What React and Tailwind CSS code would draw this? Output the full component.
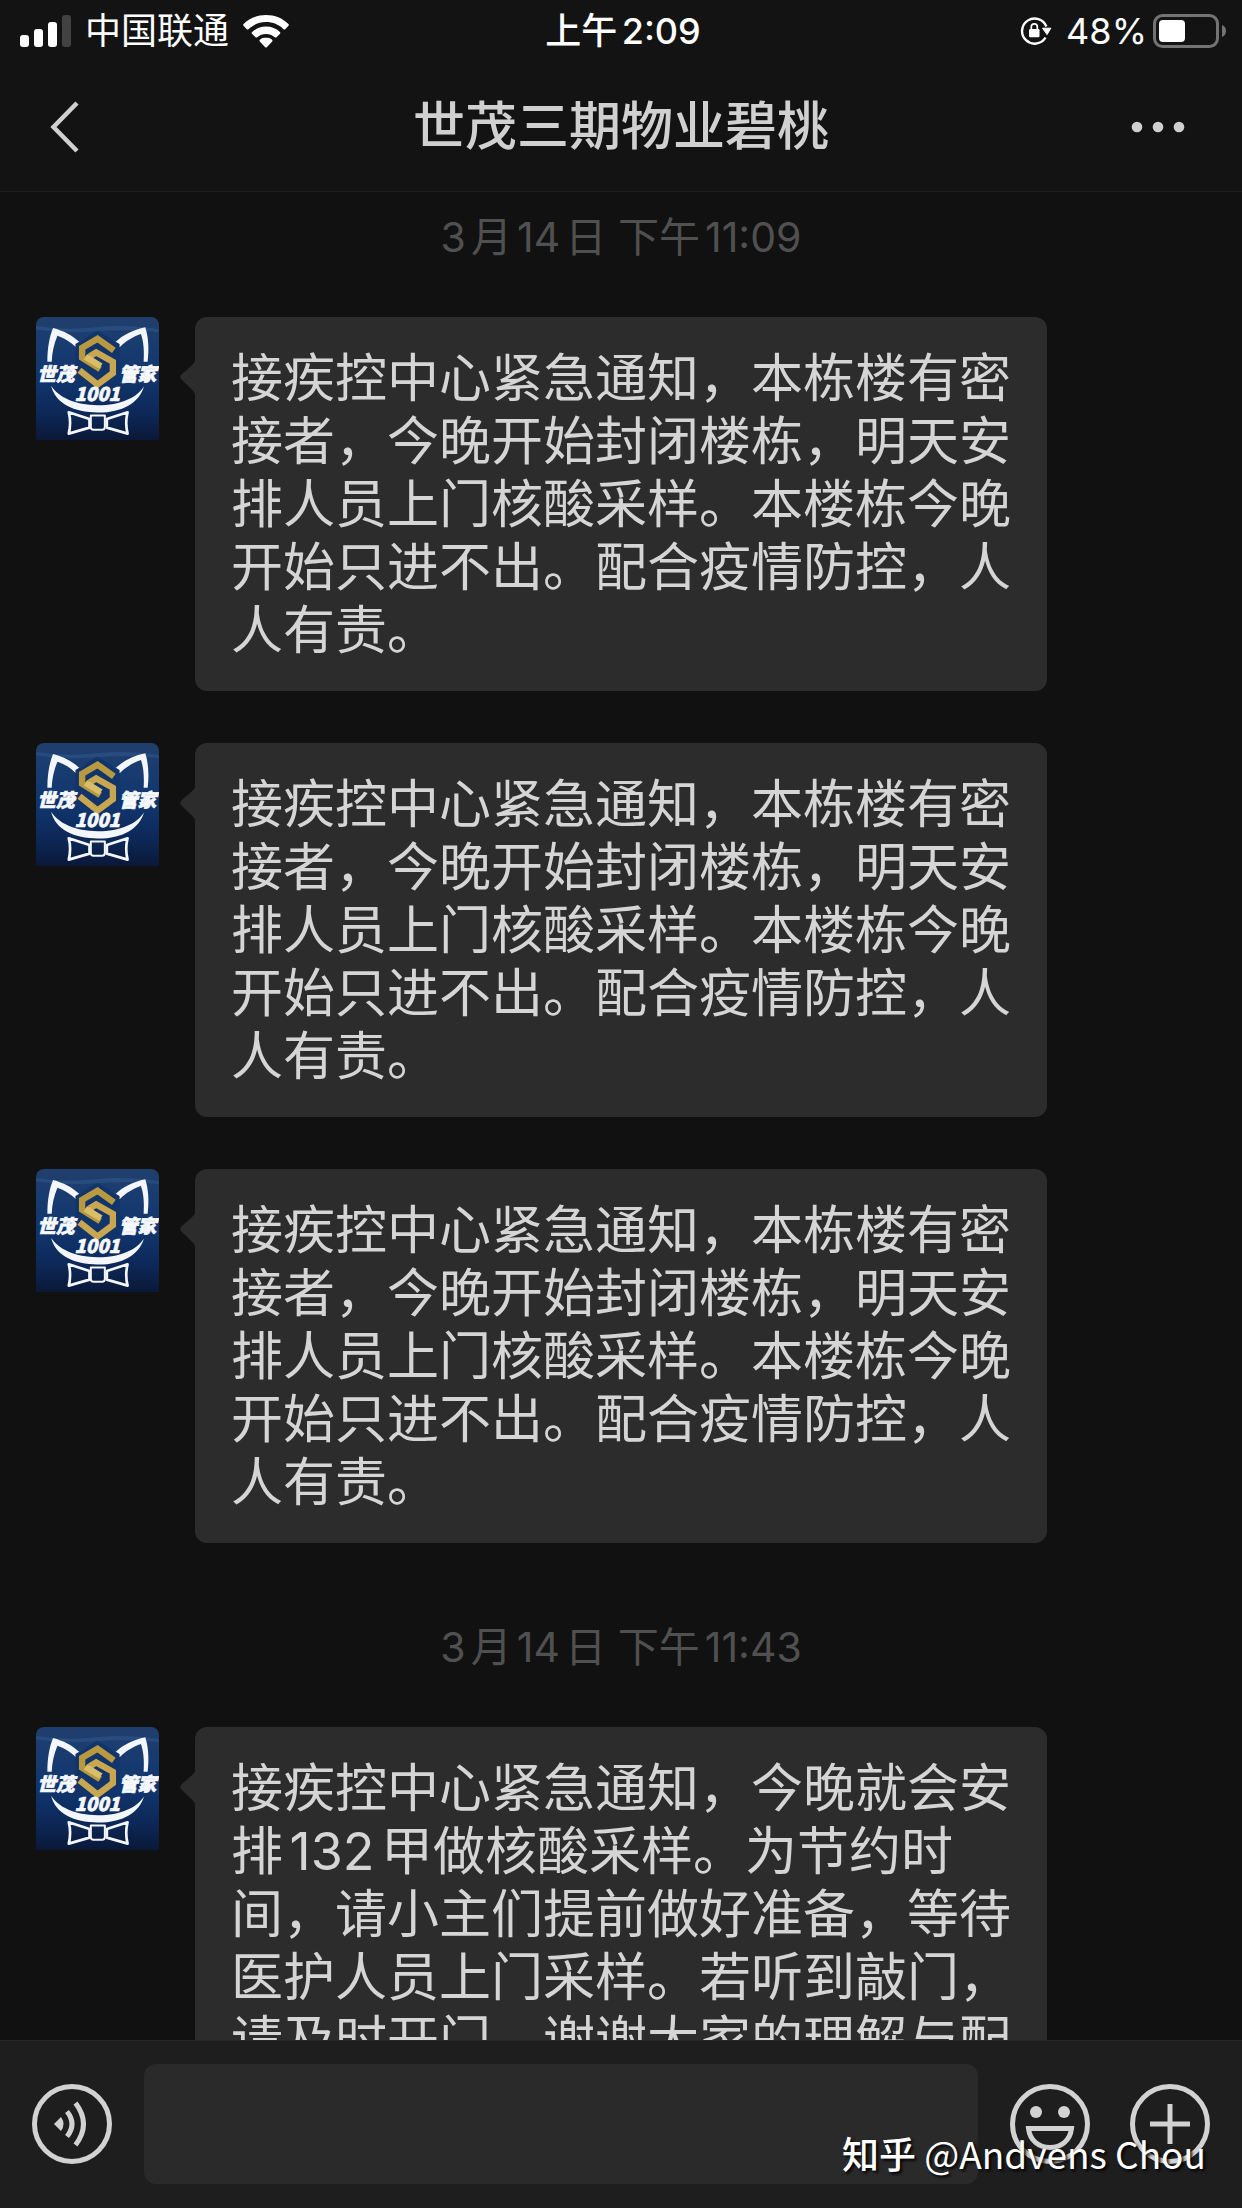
const notice =
  "接疾控中心紧急通知，本栋楼有密接者，今晚开始封闭楼栋，明天安排人员上门核酸采样。本楼栋今晚开始只进不出。配合疫情防控，人人有责。";

const groups = [
  { time: "3月14日 下午11:09", messages: [notice, notice, notice] },
  {
    time: "3月14日 下午11:43",
    messages: [
      "接疾控中心紧急通知，今晚就会安排132甲做核酸采样。为节约时间，请小主们提前做好准备，等待医护人员上门采样。若听到敲门，请及时开门，谢谢大家的理解与配合。",
    ],
  },
];

function SignalIcon() {
  return (
    <svg className="h-8 w-[51px]" viewBox="0 0 51 32" fill="#fff" aria-hidden="true">
      <rect x="0" y="20" width="9" height="12" rx="3" />
      <rect x="14" y="14" width="9" height="18" rx="3" />
      <rect x="28" y="7" width="9" height="25" rx="3" />
      <rect x="42" y="0" width="9" height="32" rx="3" fill="#424242" />
    </svg>
  );
}

function WifiIcon() {
  return (
    <svg className="h-[33px] w-[46px]" viewBox="0 0 46 33" fill="#fff" aria-hidden="true">
      <path d="M23 0C14.200 0 6.300 3.300.6 8.900c-.6.600-.6 1.200-.1 1.800l3.300 3.500c.5.500 1.200.5 1.700 0C10.100 9.700 16.200 7.100 23 7.100s12.900 2.600 17.500 7.100c.5.5 1.200.5 1.700 0l3.300-3.500c.5-.6.500-1.200-.1-1.800C39.700 3.300 31.800 0 23 0z" />
      <path d="M23 11.600c-5.400 0-10.200 2-13.900 5.400-.6.500-.6 1.200-.1 1.700l3.500 3.500c.5.500 1.100.5 1.700.1 2.400-2.200 5.400-3.400 8.800-3.400s6.400 1.200 8.800 3.400c.6.400 1.200.4 1.700-.1l3.500-3.500c.5-.5.500-1.200-.1-1.700-3.700-3.400-8.500-5.400-13.900-5.400z" />
      <path d="M23 22.600c-2.400 0-4.500.8-6.100 2.200-.6.500-.6 1.100-.1 1.600l5.400 5.800c.5.500 1.100.5 1.600 0l5.400-5.800c.5-.5.500-1.100-.1-1.600-1.600-1.400-3.700-2.200-6.100-2.200z" />
    </svg>
  );
}

function RotationLockIcon() {
  return (
    <svg className="h-[30px] w-[32px]" viewBox="0 0 32 30" fill="none" aria-hidden="true">
      <path d="M25.500 21.500A12.600 12.600 0 1 1 26.400 10.500" stroke="#fff" strokeWidth="2.400" />
      <path d="M22.500 12.200h8.400L27 18.600z" fill="#fff" stroke="#fff" strokeLinejoin="round" />
      <rect x="9" y="13" width="10.500" height="8.200" rx="1.200" fill="#fff" />
      <path d="M11.300 13.500v-2.700a3 3 0 0 1 6 0v2.700" stroke="#fff" strokeWidth="1.700" />
    </svg>
  );
}

function BatteryIcon() {
  return (
    <svg className="h-[34px] w-[73px]" viewBox="0 0 73 34" fill="none" aria-hidden="true">
      <rect x="1.500" y="1.500" width="63" height="31" rx="8" stroke="#737373" strokeWidth="3" />
      <rect x="6" y="6" width="26" height="22" rx="4" fill="#fff" />
      <path d="M69 11c2.600 1 4 3.300 4 6s-1.400 5-4 6z" fill="#737373" />
    </svg>
  );
}

function StatusBar() {
  return (
    <div className="grid grid-cols-[1fr_auto_1fr] items-center pt-2 pl-5 pr-4 text-4xl leading-[46px] text-white">
      <div className="flex items-center gap-[14px]">
        <SignalIcon />
        <span>中国联通</span>
        <WifiIcon />
      </div>
      <span className="font-medium [text-autospace:normal]">上午2:09</span>
      <div className="flex items-center justify-end">
        <RotationLockIcon />
        <span className="ml-[14px] mr-[6px]">48%</span>
        <BatteryIcon />
      </div>
    </div>
  );
}

function Header() {
  return (
    <header className="shrink-0 border-b border-[#1e1e1e] bg-[#131313] pb-6">
      <StatusBar />
      <div className="flex items-center justify-between pt-[33px] pl-[48px] pr-[56px] text-[#d0d0d0]">
        <button type="button" aria-label="返回" className="w-[64px]">
          <svg className="h-[52px] w-8" viewBox="0 0 32 52" fill="none" aria-hidden="true">
            <path d="M29 2L5.500 26 29 50" stroke="currentColor" strokeWidth="4.500" />
          </svg>
        </button>
        <h1 className="text-[52px] leading-[80px] font-medium">世茂三期物业碧桃</h1>
        <button type="button" aria-label="更多" className="w-[56px]">
          <svg className="h-3 w-14" viewBox="0 0 56 12" fill="currentColor" aria-hidden="true">
            <circle cx="7" cy="6" r="5.300" />
            <circle cx="28" cy="6" r="5.300" />
            <circle cx="49" cy="6" r="5.300" />
          </svg>
        </button>
      </div>
    </header>
  );
}

function Avatar() {
  return (
    <svg
      className="size-[123px] shrink-0 rounded-t-lg"
      viewBox="48 51 368 368"
      role="img"
      aria-label="世茂管家"
    >
      <defs>
        <linearGradient id="sky" x1="0" y1="0" x2="0" y2="1">
          <stop offset="0" stopColor="#213f6c" />
          <stop offset="0.200" stopColor="#193c70" />
          <stop offset="0.500" stopColor="#10366e" />
          <stop offset="0.780" stopColor="#0d2857" />
          <stop offset="1" stopColor="#0a1838" />
        </linearGradient>
      </defs>
      <rect x="48" y="51" width="368" height="368" fill="url(#sky)" />
      <path d="M48 78q90 14 180 4t188 6v8q-90-10-188-2t-180-6z" fill="#34598f" opacity="0.500" />
      <g fill="#f3f6fb">
        <path d="M82 185C82 145 88 110 99 84c30 8 58 22 79 42 34-23 72-24 108 0 22-21 52-36 89-44 9 28 12 64 7 103h-12c2-34 0-60-8-83-24 8-44 20-63 39l-14 2c-34-24-70-24-104 0l-14-2c-18-17-34-27-55-34-10 24-16 50-17 78z" />
        <path d="M93 257c22 34 72 58 140 58s116-22 138-56c-14 50-68 79-138 78-72-1-126-26-140-80z" />
      </g>
      <g fill="none" stroke="#f3f6fb" strokeLinejoin="round">
        <path d="M146 336l62 20v26l-62 18q8-32 0-64zM322 336l-62 20v26l62 18q-8-32 0-64z" strokeWidth="8" />
        <path d="M212 346h42v34q0 8-8 8h-26q-8 0-8-8z" strokeWidth="6" />
      </g>
      <path d="M232 92l66 40v104l-66 40-66-40V132z" fill="#11356b" />
      <g fill="none" strokeWidth="19">
        <path d="M281 151l-49-35-46 27v30l54 34" stroke="#b8993f" />
        <path d="M178 210l54 43 46-34v-34l-50-28-20 12" stroke="#c9a750" />
        <path d="M196 170l46 28" stroke="#d9bd68" />
      </g>
      <g
        fill="#f6f8fc"
        stroke="#f6f8fc"
        strokeWidth="2"
        className="font-['Noto_Sans_CJK_SC',sans-serif] font-black italic"
      >
        <text x="52" y="241" fontSize="56">世茂</text>
        <text x="296" y="241" fontSize="56">管家</text>
        <text x="163" y="303" fontSize="56">1001</text>
      </g>
    </svg>
  );
}

function Message({ text }) {
  return (
    <li className="flex items-start gap-9">
      <Avatar />
      <div className="relative max-w-[852px] flex-1 rounded-xl bg-[#2c2c2c] px-9 pt-[30px] pb-[29px]">
        <svg
          className="absolute top-11 right-full h-[33px] w-[15px]"
          viewBox="0 0 15 33"
          fill="#2c2c2c"
          aria-hidden="true"
        >
          <path d="M15 0C14 3 11 5 1.500 13.500q-2.500 2.500 0 5C11 28 14 30 15 33z" />
        </svg>
        <p className="text-[52px] leading-[63px] text-[#d5d5d5] [text-autospace:normal]">{text}</p>
      </div>
    </li>
  );
}

function InputBar() {
  return (
    <footer className="flex shrink-0 items-center border-t border-[#262626] bg-[#1e1e1e] px-8 pt-[23px] pb-6 text-[#d2d2d2]">
      <button type="button" aria-label="语音" className="size-20 shrink-0">
        <svg className="size-20" viewBox="0 0 80 80" fill="none" stroke="currentColor" strokeWidth="5" aria-hidden="true">
          <circle cx="40" cy="40" r="37.500" />
          <path d="M22 40l7-7q5 7 0 14z" fill="currentColor" stroke="none" />
          <path d="M35 27.500q10 12.500 0 25M43.500 19q16 21 0 42" />
        </svg>
      </button>
      <input
        type="text"
        aria-label="输入消息"
        className="mx-8 h-[120px] min-w-0 flex-1 rounded-xl bg-[#2a2a2a] px-6 text-[52px] outline-none"
      />
      <button type="button" aria-label="表情" className="mr-10 size-20 shrink-0">
        <svg className="size-20" viewBox="0 0 80 80" fill="none" stroke="currentColor" strokeWidth="5" aria-hidden="true">
          <circle cx="40" cy="40" r="37.500" />
          <circle cx="26" cy="28" r="6" fill="currentColor" stroke="none" />
          <circle cx="54" cy="28" r="6" fill="currentColor" stroke="none" />
          <path d="M18.500 44.500h43C60 57 51 63.500 40 63.500S20 57 18.500 44.500z" />
        </svg>
      </button>
      <button type="button" aria-label="更多功能" className="size-20 shrink-0">
        <svg className="size-20" viewBox="0 0 80 80" fill="none" stroke="currentColor" strokeWidth="5" aria-hidden="true">
          <circle cx="40" cy="40" r="37.500" />
          <path d="M40 20v40M20 40h40" />
        </svg>
      </button>
    </footer>
  );
}

export default function App() {
  return (
    <div
      lang="zh-CN"
      className="relative flex h-screen flex-col overflow-hidden bg-[#111111] font-['Inter','Noto_Sans_CJK_SC',sans-serif]"
    >
      <Header />
      <main className="flex min-h-0 flex-1 flex-col gap-[76px] overflow-y-auto px-9 pt-[17px] [scrollbar-width:none]">
        {groups.map((group) => (
          <section key={group.time} className="flex flex-col gap-[52px]">
            <time className="text-center text-[41px] leading-[56px] text-[#505050] [text-autospace:normal]">
              {group.time}
            </time>
            <ul className="flex flex-col gap-[52px]">
              {group.messages.map((text, i) => (
                <Message key={i} text={text} />
              ))}
            </ul>
          </section>
        ))}
      </main>
      <InputBar />
      <p className="pointer-events-none absolute right-9 bottom-7 font-['Noto_Sans_CJK_SC',sans-serif] text-[37px] leading-[54px] text-white [text-shadow:2px_2px_3px_#000000]">
        <span className="font-medium">知乎</span> @Andvens Chou
      </p>
    </div>
  );
}
